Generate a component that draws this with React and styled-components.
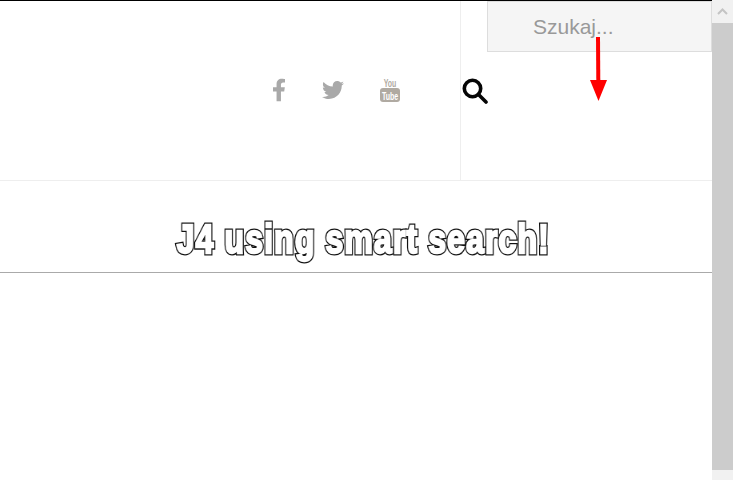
import React from 'react'
import styled, { createGlobalStyle } from 'styled-components'
import { FaFacebookF, FaTwitter } from 'react-icons/fa'

const Global = createGlobalStyle`
  html, body { margin: 0; padding: 0; height: 100%; overflow: hidden; background: #fff; }
  #root { height: 100%; }
`

const Page = styled.div`
  position: relative;
  display: flex;
  width: 733px;
  height: 480px;
  overflow: hidden;
  font-family: "Liberation Sans", Arial, sans-serif;
`

const Main = styled.div`
  width: 712px;
  border-top: 1px solid #000;
  box-sizing: border-box;
`

const Header = styled.header`
  display: flex;
  justify-content: flex-end;
  box-sizing: border-box;
  height: 180px;
  border-bottom: 1px solid #eee;
`

const Social = styled.div`
  display: flex;
  align-items: center;
  padding: 0 60px 2px 0;
`

const SocialLink = styled.a`
  display: flex;
  justify-content: center;
  width: ${(props) => props.$w}px;
  margin-right: ${(props) => props.$gap}px;
  color: #a9a9a9;
  font-size: ${(props) => props.$size}px;
`

const YouTube = styled.svg`
  width: 20px;
  height: 26px;
  display: block;
`

const SearchCell = styled.div`
  display: flex;
  align-items: center;
  width: 252px;
  padding: 0 0 0 1px;
  box-sizing: border-box;
  border-left: 1px solid #eee;
`

const SearchButton = styled.button`
  display: flex;
  border: 0;
  padding: 0;
  background: none;
`

const TitleRow = styled.div`
  display: flex;
  justify-content: center;
  box-sizing: border-box;
  height: 92px;
  padding: 33px 0 0 14px;
  border-bottom: 1px solid #aaa;
`

const Title = styled.h1`
  position: relative;
  margin: 0;
  font-family: "Liberation Sans", sans-serif;
  font-size: 40px;
  line-height: 50px;
  font-weight: 700;
  letter-spacing: 1.4px;
  color: #111;
  -webkit-text-stroke: 5px #111;
  white-space: nowrap;
  transform: scaleX(0.8);
  will-change: transform;
  &::after {
    content: attr(data-text);
    position: absolute;
    top: 0;
    left: 0;
    color: #fff;
    -webkit-text-stroke: 2.4px #fff;
  }
`

const Scrollbar = styled.div`
  display: flex;
  flex-direction: column;
  width: 21px;
  background: #f1f1f1;
`

const ScrollUp = styled.div`
  display: flex;
  justify-content: center;
  align-items: center;
  height: 23px;
`

const ScrollThumb = styled.div`
  height: 447px;
  background: #ccc;
`

const SearchPopup = styled.input`
  position: absolute;
  top: 1px;
  left: 487px;
  width: 225px;
  height: 51px;
  box-sizing: border-box;
  padding: 1px 0 0 45px;
  border: 1px solid #ddd;
  background: #f5f5f5;
  font-family: inherit;
  font-size: 21px;
  outline: none;
  &::placeholder { color: #999; opacity: 1; }
`

const Arrow = styled.svg`
  position: absolute;
  top: 36px;
  left: 588px;
  width: 20px;
  height: 66px;
`

export default function App() {
  return (
    <Page>
      <Global />
      <Main>
        <Header>
          <Social>
            <SocialLink $w={14} $gap={36} $size={24}><FaFacebookF /></SocialLink>
            <SocialLink $w={22} $gap={36} $size={22}><FaTwitter /></SocialLink>
            <SocialLink $w={20} $gap={0} $size={22}>
              <YouTube viewBox="0 0 20 26">
                <text transform="translate(10 10) scale(1 1.5)" textAnchor="middle" fontFamily="Liberation Sans" fontWeight="700" fontSize="7" fill="#b0aaa2">You</text>
                <rect x="0" y="11" width="20" height="14" rx="3" fill="#b0aaa2" />
                <text transform="translate(10 22.5) scale(1 1.6)" textAnchor="middle" fontFamily="Liberation Sans" fontWeight="700" fontSize="7" fill="#fff">Tube</text>
              </YouTube>
            </SocialLink>
          </Social>
          <SearchCell>
            <SearchButton>
              <svg width="26" height="26" viewBox="0 0 26 26" fill="none" stroke="#050505" strokeWidth="3.6">
                <circle cx="10.5" cy="10.5" r="8.2" />
                <path d="M16.5 16.5l7.5 7.5" strokeLinecap="round" />
              </svg>
            </SearchButton>
          </SearchCell>
        </Header>
        <TitleRow>
          <Title data-text="J4 using smart search!">J4 using smart search!</Title>
        </TitleRow>
      </Main>
      <Scrollbar>
        <ScrollUp>
          <svg width="11" height="7" viewBox="0 0 11 7" fill="none" stroke="#c4c4c4" strokeWidth="2">
            <path d="M1 6l4.5-4.5L10 6" />
          </svg>
        </ScrollUp>
        <ScrollThumb />
      </Scrollbar>
      <SearchPopup placeholder="Szukaj..." />
      <Arrow viewBox="0 0 20 66">
        <path d="M8 1l4 0 0.3 44 -4 0z" fill="#f00" />
        <path d="M2 44h17l-8.5 21z" fill="#f00" />
      </Arrow>
    </Page>
  )
}
